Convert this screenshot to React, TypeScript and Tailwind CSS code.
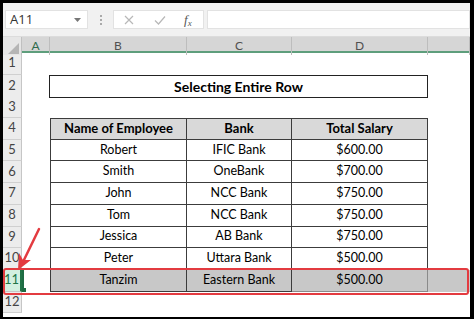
const font = "font-['Lato','Open_Sans',sans-serif]";

const rows: [string, string, string][] = [
  ["Robert", "IFIC Bank", "$600.00"],
  ["Smith", "OneBank", "$700.00"],
  ["John", "NCC Bank", "$750.00"],
  ["Tom", "NCC Bank", "$750.00"],
  ["Jessica", "AB Bank", "$750.00"],
  ["Peter", "Uttara Bank", "$500.00"],
];

const cols = "grid grid-cols-[19px_28px_137px_105px_136px_42px]";

function RowHead({ n, active }: { n: number; active?: boolean }) {
  return (
    <div
      className={
        active
          ? "flex items-end justify-center pb-[1px] bg-[#d3f0e0] text-[#217346] border-r-2 border-r-[#217346] border-b border-b-[#c6c6c6] text-[13px]"
          : "flex items-end justify-center pb-[1px] bg-[#ececec] text-[#444] border-r border-r-[#c6c6c6] border-b border-b-[#d0d0d0] text-[13px]"
      }
    >
      {n}
    </div>
  );
}

function Cell({
  children,
  head,
  first,
  top,
}: {
  children?: React.ReactNode;
  head?: boolean;
  first?: boolean;
  top?: boolean;
}) {
  return (
    <div
      className={`flex items-center justify-center border-r border-b border-[#3c3c3c] text-[12.5px] text-black ${
        first ? "border-l" : ""
      } ${top ? "border-t-[1.5px]" : ""} ${head ? "bg-[#d9d9d9] font-bold text-[13px]" : "bg-white"}`}
    >
      {children}
    </div>
  );
}

export default function App() {
  return (
    <div className={`w-[474px] h-[319px] bg-black pt-[3px] pl-[3px] pr-[4px] pb-[2px] ${font}`}>
      <div className="relative w-full h-full bg-white overflow-hidden flex flex-col">
        {/* formula bar */}
        <div className="h-[34px] shrink-0 bg-[#f1f1f1] border-b border-[#dcdcdc] flex items-start pt-[7px] pl-[2px] pr-0 gap-0">
          <div className="w-[83px] h-[19px] bg-white border border-[#e2e2e2] flex items-center justify-between pl-[4px] pr-[6px]">
            <span className="text-[13px] text-[#333] font-['Open_Sans',sans-serif]">A11</span>
            <svg width="7" height="4" viewBox="0 0 7 4">
              <path d="M0 0h7L3.5 4z" fill="#777" />
            </svg>
          </div>
          <div className="w-[25px] h-[19px] flex flex-col items-center justify-center gap-[2px]">
            <span className="w-[2px] h-[2px] bg-[#aaa]" />
            <span className="w-[2px] h-[2px] bg-[#aaa]" />
            <span className="w-[2px] h-[2px] bg-[#aaa]" />
          </div>
          <div className="w-[91px] h-[19px] bg-white border border-[#e2e2e2] flex items-center pl-[10px] gap-[14px]">
            <svg width="10" height="10" viewBox="0 0 10 10">
              <path d="M1 1l8 8M9 1l-8 8" stroke="#b8b8b8" strokeWidth="1.2" />
            </svg>
            <svg width="12" height="10" viewBox="0 0 12 10" className="ml-[6px]">
              <path d="M1 5.5l3.5 3.5L11 1.5" stroke="#b8b8b8" strokeWidth="1.2" fill="none" />
            </svg>
            <span className="ml-[4px] text-[13px] italic text-[#555] font-['Liberation_Serif',serif] leading-none">
              f<sub className="text-[9px]">x</sub>
            </span>
          </div>
          <div className="ml-[3px] flex-1 h-[19px] bg-white border border-[#e2e2e2]" />
        </div>

        {/* column headers */}
        <div className={`${cols} h-[16px] shrink-0 bg-[#d6d6d6] border-b-2 border-[#5e9e7c]`}>
          <div className="relative bg-[#e6e6e6] border-r border-[#c0c0c0]">
            <svg width="11" height="11" viewBox="0 0 11 11" className="absolute right-[2px] bottom-[1px]">
              <path d="M11 0v11H0z" fill="#b5b5b5" />
            </svg>
          </div>
          {["A", "B", "C", "D", ""].map((c, i) => (
            <div
              key={i}
              className={`flex items-center justify-center text-[12px] border-r border-[#bdbdbd] ${
                i === 0 ? "text-[#2f6b4d]" : "text-[#505050]"
              }`}
            >
              {c}
            </div>
          ))}
        </div>

        {/* sheet body */}
        <div className="flex flex-col">
          {/* row 1 */}
          <div className={`${cols} h-[21.7px]`}>
            <RowHead n={1} />
          </div>
          {/* row 2 title */}
          <div className={`${cols} h-[21.7px]`}>
            <RowHead n={2} />
            <div className="border-r border-[#222]" />
            <div className="col-span-3 flex items-center justify-center border-y-[1.5px] border-r-[1.5px] border-[#222] text-[14px] font-bold text-black">
              Selecting Entire Row
            </div>
          </div>
          {/* row 3 */}
          <div className={`${cols} h-[21.7px]`}>
            <RowHead n={3} />
          </div>
          {/* row 4 header */}
          <div className={`${cols} h-[21.7px]`}>
            <RowHead n={4} />
            <div />
            <Cell head first top>Name of Employee</Cell>
            <Cell head top>Bank</Cell>
            <Cell head top>Total Salary</Cell>
          </div>
          {rows.map((r, i) => (
            <div key={i} className={`${cols} h-[21.7px]`}>
              <RowHead n={5 + i} />
              <div />
              <Cell first>{r[0]}</Cell>
              <Cell>{r[1]}</Cell>
              <Cell>{r[2]}</Cell>
            </div>
          ))}
          {/* row 11 selected */}
          <div className={`${cols} h-[21.7px]`}>
            <RowHead n={11} active />
            <div className="relative bg-white">
              <span className="absolute left-0 top-0 bottom-[2px] w-[2px] bg-[#1e6b43]" />
              <span className="absolute left-0 bottom-0 w-[4px] h-[4px] bg-[#1e6b43]" />
            </div>
            <div className="flex items-center justify-center bg-[#c8c8c8] border-l border-r border-b border-[#3c3c3c] text-[12.5px] text-black">
              Tanzim
            </div>
            <div className="flex items-center justify-center bg-[#c8c8c8] border-r border-b border-[#3c3c3c] text-[12.5px] text-black">
              Eastern Bank
            </div>
            <div className="flex items-center justify-center bg-[#c8c8c8] border-r border-b border-[#8a8a8a] text-[12.5px] text-black">
              $500.00
            </div>
            <div className="bg-[#c8c8c8]" />
          </div>
          {/* row 12 */}
          <div className={`${cols} h-[21.7px]`}>
            <RowHead n={12} />
          </div>
        </div>

        {/* red highlight */}
        <div className="absolute left-0 top-[265px] w-[466px] h-[27px] border-[2.5px] border-[#e33b40] rounded-[3px] pointer-events-none" />
        <svg className="absolute left-0 top-0 pointer-events-none" width="60" height="280" viewBox="0 0 60 280">
          <path d="M36 226 L19 261" stroke="#e33b40" strokeWidth="2.5" strokeLinecap="round" />
          <path d="M15 267 L16 250 L20 257 L28 257 Z" fill="#e33b40" />
        </svg>
      </div>
    </div>
  );
}
